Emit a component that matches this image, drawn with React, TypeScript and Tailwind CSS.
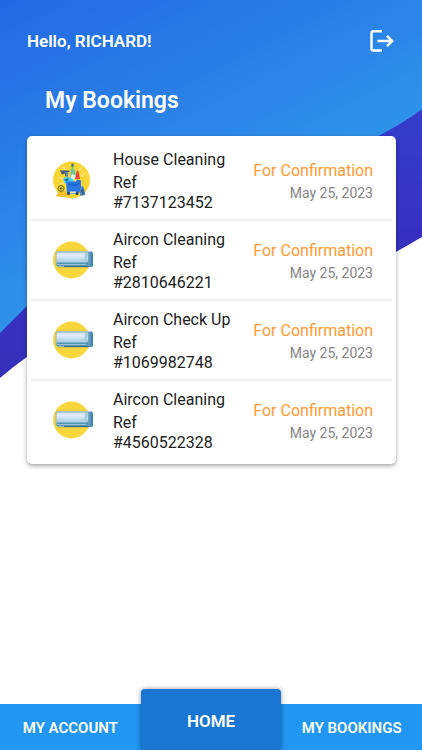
import React from 'react';

type Service = 'house' | 'aircon';

interface Booking {
  title: string;
  reference: string;
  status: string;
  date: string;
  service: Service;
}

const bookings: Booking[] = [
  { title: 'House Cleaning', reference: '#7137123452', status: 'For Confirmation', date: 'May 25, 2023', service: 'house' },
  { title: 'Aircon Cleaning', reference: '#2810646221', status: 'For Confirmation', date: 'May 25, 2023', service: 'aircon' },
  { title: 'Aircon Check Up', reference: '#1069982748', status: 'For Confirmation', date: 'May 25, 2023', service: 'aircon' },
  { title: 'Aircon Cleaning', reference: '#4560522328', status: 'For Confirmation', date: 'May 25, 2023', service: 'aircon' },
];

function Backdrop() {
  return (
    <svg className="absolute inset-x-0 top-0 -z-10 h-96 w-full" viewBox="0 0 422 384" preserveAspectRatio="none" aria-hidden="true">
      <defs>
        <linearGradient id="sky" gradientUnits="userSpaceOnUse" x1="40" y1="-20" x2="190" y2="270">
          <stop offset="0" stopColor="#2368e3" />
          <stop offset="1" stopColor="#3097ea" />
        </linearGradient>
        <linearGradient id="indigo" x1="0" y1="0" x2="0" y2="1">
          <stop offset="0" stopColor="#3340cc" />
          <stop offset="0.5" stopColor="#3730bf" />
          <stop offset="1" stopColor="#3730bb" />
        </linearGradient>
      </defs>
      <path d="M0 300 L422 90 V237 L396 252 C300 300 180 250 27 357 Q14 366 0 378 Z" fill="url(#indigo)" />
      <path d="M0 0 H422 V109 Q402 124 380 135 C270 200 120 205 27 306 L0 333 Z" fill="url(#sky)" />
    </svg>
  );
}

function HouseIcon() {
  return (
    <svg viewBox="0 0 42 42" className="h-[42px] w-[42px]" aria-hidden="true">
      <circle cx="19.500" cy="20" r="18.500" fill="#f9d634" />
      <g stroke="#efe6a0" strokeWidth="1.200">
        <path d="M7 17l4 2M30 7l-3 4M34 13l-5 3M11 7l3 3M8 24l5-1" />
      </g>
      <path d="M19.500 4.500h2v4l2 3v6h-5v-6l1-3z" fill="#6fc59a" />
      <path d="M19.500 3.500h2v3h-2z" fill="#3a6a6a" />
      <path d="M8 10.500h9.500v1.500h-2v5l-2.500-1v-2.500l-3 1z" fill="#41597a" />
      <path d="M13.500 12l3 .5-.5 4-2-1z" fill="#6c8ea8" />
      <path d="M24.500 12l1.500-2 1 3 1 6h-5z" fill="#e6453a" />
      <path d="M20 14l3.500 1.500-1 5h-5z" fill="#e9fbf8" />
      <path d="M11 19q3-3 7-1.500l4 3-2 3h-7z" fill="#45cdf0" />
      <path d="M12 19.500l5-1-2 3z" fill="#1c63a0" />
      <path d="M14 21.500h10l1-2 4 1v10l-3 3.500H15z" fill="#2b78e4" />
      <path d="M16 23.500l8 .8 4-2v1.500l-4 2-8-.8z" fill="#1f62c8" />
      <path d="M18 31.500h6v2h-6z" fill="#e9e4b0" />
      <circle cx="16.500" cy="33.500" r="1.500" fill="#1d3f78" />
      <circle cx="25" cy="33.500" r="1.500" fill="#1d3f78" />
      <path d="M28 28q2.500-4 4 0l1.500 7-5.500 1z" fill="#5b8fc2" />
      <path d="M29 30l2-2 1 6-2 1z" fill="#33588a" />
      <path d="M4 36l3-5h6l3 5q-6 2-12 0z" fill="#f7bf22" />
      <circle cx="9" cy="28.500" r="3" fill="#dfc42c" stroke="#77701f" />
      <path d="M9 27.200v2.600M7.700 28.500h2.600" stroke="#5d5920" strokeWidth=".8" />
    </svg>
  );
}

function AirconIcon() {
  return (
    <svg viewBox="0 0 42 42" className="h-[42px] w-[42px]" aria-hidden="true">
      <defs>
        <linearGradient id="unit" x1="0" y1="0" x2="0" y2="1">
          <stop offset="0" stopColor="#c5deed" />
          <stop offset="0.35" stopColor="#e2edf8" />
          <stop offset="1" stopColor="#9bc9e0" />
        </linearGradient>
        <linearGradient id="side" x1="0" y1="0" x2="1" y2="0">
          <stop offset="0" stopColor="#8cc4dc" />
          <stop offset="1" stopColor="#367a9b" />
        </linearGradient>
      </defs>
      <circle cx="19.500" cy="20" r="18.500" fill="#f9d63c" />
      <path d="M35 11.500h5l1 2v12l-1 1.500h-6z" fill="url(#side)" />
      <path d="M5 11.500h31v11.500H4z" fill="url(#unit)" />
      <path d="M4 11.500h32v1H4z" fill="#81adc5" />
      <path d="M33 12.500h3L35 23h-3z" fill="#a6cee0" />
      <path d="M4 22.500h30.500l2-1V27H6l-2-2z" fill="#5796b5" />
      <path d="M5 24h29v1H5z" fill="#99bfd0" />
      <path d="M6 26h31v1.200H6z" fill="#34718d" />
      <path d="M4 12v13" stroke="#9dbdc7" />
      <path d="M6 27l2-1 2 1 2-1" fill="none" stroke="#f3e4a0" strokeWidth=".8" />
    </svg>
  );
}

function BookingRow({ booking }: { booking: Booking }) {
  return (
    <li className="flex items-center border-b-2 border-[#f0f0f0] pt-2 pr-[19px] pb-1.5 pl-[21px] last:border-transparent">
      <div className="w-[61px] shrink-0">{booking.service === 'house' ? <HouseIcon /> : <AirconIcon />}</div>
      <div className="min-w-0 flex-1 leading-5 text-[#212121]">
        <h2 className="leading-[22px] whitespace-nowrap">{booking.title}</h2>
        <p className="mt-0.5">
          Ref
          <br />
          {booking.reference}
        </p>
      </div>
      <div className="shrink-0 text-right">
        <p className="leading-6 text-[#ff9b36]">{booking.status}</p>
        <p className="text-sm leading-5 text-[#858585]">{booking.date}</p>
      </div>
    </li>
  );
}

export default function App() {
  return (
    <div className="relative isolate flex min-h-screen flex-col bg-white font-['Roboto',sans-serif] text-base">
      <Backdrop />
      <header className="flex items-center justify-between pt-[27px] pr-[26px] pl-[27px]">
        <p className="text-[17px] leading-6 font-semibold text-white">Hello, RICHARD!</p>
        <button type="button" aria-label="Log out" className="text-white">
          <svg viewBox="0 0 28 28" className="h-7 w-7" fill="none" stroke="currentColor" strokeWidth="2.400" aria-hidden="true">
            <path d="M14 4.200H5.500Q3.500 4.200 3.500 6.200V21.500Q3.500 23.500 5.500 23.500H14" />
            <path d="M9.500 14H24M19 8.800L24.200 14L19 19.200" />
          </svg>
        </button>
      </header>
      <main className="flex-1 pr-[26px] pb-8 pl-[27px]">
        <h1 className="mt-[30px] px-[18px] text-[23px] leading-8 font-semibold text-white">My Bookings</h1>
        <ul className="mt-[19px] rounded-[5px] bg-white px-1 pt-[5px] pb-[3px] shadow-[0_2px_4px_rgba(0,0,0,0.35)]">
          {bookings.map((booking) => (
            <BookingRow key={booking.reference} booking={booking} />
          ))}
        </ul>
      </main>
      <nav className="grid grid-cols-3 items-end bg-linear-to-t from-[#2196f3] from-[46px] to-transparent to-[46px] font-semibold text-white">
        <a href="#account" className="flex h-[46px] items-center justify-center pt-0.5 text-[15px]">MY ACCOUNT</a>
        <a href="#home" className="flex h-[61px] items-center justify-center rounded-t bg-[#1976d2] pt-1 text-[17px] shadow-[0_0_5px_rgba(0,0,0,0.4)]">HOME</a>
        <a href="#bookings" className="flex h-[46px] items-center justify-center pt-0.5 text-[15px]">MY BOOKINGS</a>
      </nav>
    </div>
  );
}
